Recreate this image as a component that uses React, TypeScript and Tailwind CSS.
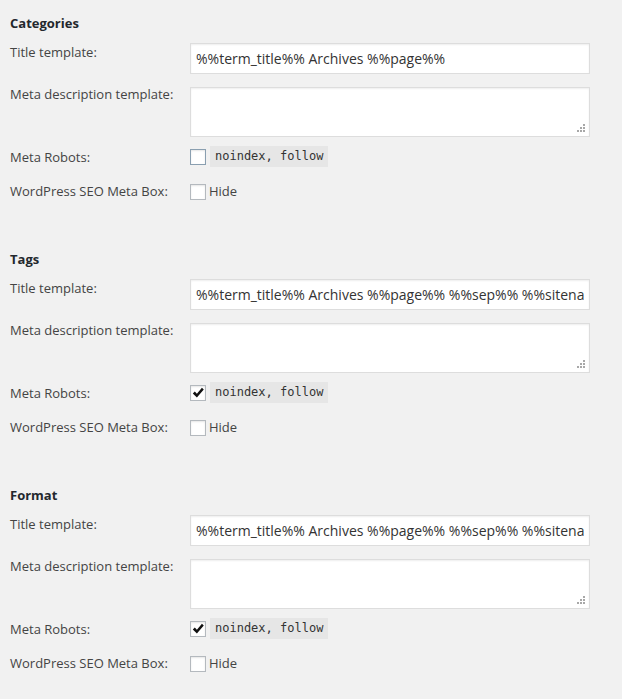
import React from "react";

const font = { fontFamily: '"Open Sans", "Noto Sans", sans-serif' };

function Grip() {
  const dots: [number, number][] = [
    [6, 0],
    [6, 3],
    [3, 3],
    [6, 6],
    [3, 6],
    [0, 6],
  ];
  return (
    <svg className="absolute right-[3px] bottom-[3px]" width="9" height="9" viewBox="0 0 9 9">
      {dots.map(([x, y], i) => (
        <rect key={i} x={x} y={y} width="2" height="2" fill="#a8a8a8" />
      ))}
    </svg>
  );
}

function Check({ checked, focus }: { checked?: boolean; focus?: boolean }) {
  return (
    <span
      className={
        "relative inline-block w-[16px] h-[16px] bg-white border shadow-[inset_0_1px_2px_rgba(0,0,0,0.1)] " +
        (focus ? "border-[#8a9fb0]" : "border-[#b4b9be]")
      }
    >
      {checked && (
        <svg className="absolute left-[0px] top-[0px]" width="14" height="14" viewBox="0 0 14 14">
          <path d="M1.8 7.4 L3.8 5.5 L5.9 7.7 L10.9 1.8 L12.8 3.6 L5.9 11.6 Z" fill="#111" />
        </svg>
      )}
    </span>
  );
}

function Section({
  title,
  value,
  checked,
  focus,
}: {
  title: string;
  value: string;
  checked?: boolean;
  focus?: boolean;
}) {
  return (
    <div className="h-[236px] pl-[10px]">
      <h3 className="text-[13px] leading-[20px] font-bold text-[#23282d]">{title}</h3>
      <div className="flex mt-[10px] h-[31px]">
        <div className="w-[180px] text-[13px] leading-[20px] text-[#444] -mt-[1px]">Title template:</div>
        <div className="w-[400px] h-[31px] bg-white border border-[#ddd] shadow-[inset_0_1px_2px_rgba(0,0,0,0.07)] px-[5px]">
          <div className="overflow-hidden whitespace-nowrap text-[14px] leading-[29px] text-[#333]">{value}</div>
        </div>
      </div>
      <div className="flex mt-[13px] h-[50px]">
        <div className="w-[180px] text-[13px] leading-[20px] text-[#444] -mt-[3px]">Meta description template:</div>
        <div className="relative w-[400px] h-[50px] bg-white border border-[#ddd] shadow-[inset_0_1px_2px_rgba(0,0,0,0.07)]">
          <Grip />
        </div>
      </div>
      <div className="flex mt-[9px] h-[21px]">
        <div className="w-[180px] text-[13px] leading-[20px] text-[#444] mt-[1px]">Meta Robots:</div>
        <div className="flex items-center gap-[4px]">
          <Check checked={checked} focus={focus} />
          <code
            className="bg-[#e6e6e6] px-[5px] h-[21px] leading-[21px] text-[12px] text-[#333]"
            style={{ fontFamily: '"DejaVu Sans Mono", "Liberation Mono", monospace' }}
          >
            noindex, follow
          </code>
        </div>
      </div>
      <div className="flex mt-[14px] h-[20px]">
        <div className="w-[180px] text-[13px] leading-[20px] text-[#444]">WordPress SEO Meta Box:</div>
        <div className="flex items-center gap-[3px]">
          <span className="mt-[2px] flex"><Check /></span>
          <span className="text-[13px] leading-[20px] text-[#444]">Hide</span>
        </div>
      </div>
    </div>
  );
}

export default function App() {
  return (
    <div className="w-[622px] h-[699px] bg-[#f1f1f1] pt-[13px] overflow-hidden" style={font}>
      <Section title="Categories" value="%%term_title%% Archives %%page%%" focus />
      <Section title="Tags" value="%%term_title%% Archives %%page%% %%sep%% %%sitena" checked />
      <Section title="Format" value="%%term_title%% Archives %%page%% %%sep%% %%sitena" checked />
    </div>
  );
}
